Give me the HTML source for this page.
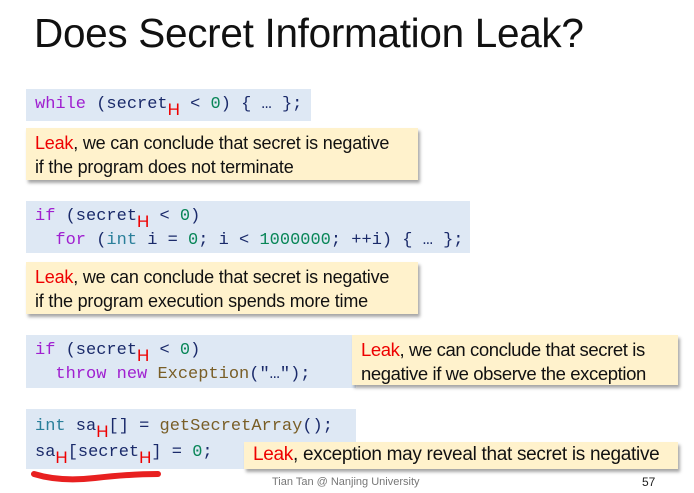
<!DOCTYPE html>
<html><head><meta charset="utf-8"><style>
body{margin:0;width:694px;height:493px;background:#fff;position:relative;overflow:hidden;font-family:"Liberation Sans",sans-serif}
.a{position:absolute}
.title{left:34px;top:10px;font-size:40.5px;color:#111;letter-spacing:-0.3px;white-space:nowrap}
.code{background:#dee8f4;font-family:"Liberation Mono",monospace;font-size:17px;color:#1a2a6a;white-space:pre;line-height:24px;padding:4px 8px 0 9px;box-sizing:border-box}
.y{background:#fff2cc;box-shadow:2px 3px 3px rgba(0,0,0,.35);font-size:18px;color:#111;line-height:24px;padding:3px 9px;box-sizing:border-box;white-space:nowrap;letter-spacing:-0.2px}
.k{color:#a020d0}.t{color:#2a7f9a}.n{color:#098658}.f{color:#795e26}
sub{color:#e00;font-family:"Liberation Sans",sans-serif;font-size:17px;vertical-align:-7px;line-height:0}
.r{color:#e00}
</style></head><body>
<div class="a title">Does Secret Information Leak?</div>

<div class="a code" style="left:26px;top:89px;width:285px;height:32px"><span class="k">while</span> (secret<sub>H</sub> &lt; <span class="n">0</span>) { … };</div>
<div class="a y" style="left:26px;top:128px;width:392px;height:52px"><span class="r">Leak</span>, we can conclude that secret is negative<br>if the program does not terminate</div>

<div class="a code" style="left:26px;top:201px;width:444px;height:52px"><span class="k">if</span> (secret<sub>H</sub> &lt; <span class="n">0</span>)
  <span class="k">for</span> (<span class="t">int</span> i = <span class="n">0</span>; i &lt; <span class="n">1000000</span>; ++i) { … };</div>
<div class="a y" style="left:26px;top:262px;width:392px;height:52px"><span class="r">Leak</span>, we can conclude that secret is negative<br>if the program execution spends more time</div>

<div class="a code" style="left:26px;top:335px;width:330px;height:53px"><span class="k">if</span> (secret<sub>H</sub> &lt; <span class="n">0</span>)
  <span class="k">throw</span> <span class="k">new</span> <span class="f">Exception</span>("…");</div>
<div class="a y" style="left:352px;top:335px;width:326px;height:50px;letter-spacing:-0.4px;font-size:18.5px"><span class="r">Leak</span>, we can conclude that secret is<br>negative if we observe the exception</div>

<div class="a code" style="left:26px;top:409px;width:330px;height:60px;padding-top:5px;line-height:26px"><span class="t">int</span> sa<sub>H</sub>[] = <span class="f">getSecretArray</span>();
sa<sub>H</sub>[secret<sub>H</sub>] = <span class="n">0</span>;</div>
<div class="a y" style="left:244px;top:442px;width:434px;height:27px;padding-top:1px;letter-spacing:-0.3px;font-size:19px"><span class="r">Leak</span>, exception may reveal that secret is negative</div>

<svg class="a" style="left:0;top:0" width="694" height="493"><path d="M34 474 Q60 482 95 478 Q130 474 158 474" stroke="#e82020" stroke-width="6" fill="none" stroke-linecap="round"/></svg>
<div class="a" style="left:272px;top:476px;font-size:11px;color:#777">Tian Tan @ Nanjing University</div>
<div class="a" style="left:642px;top:475px;font-size:12px;color:#222">57</div>
</body></html>
